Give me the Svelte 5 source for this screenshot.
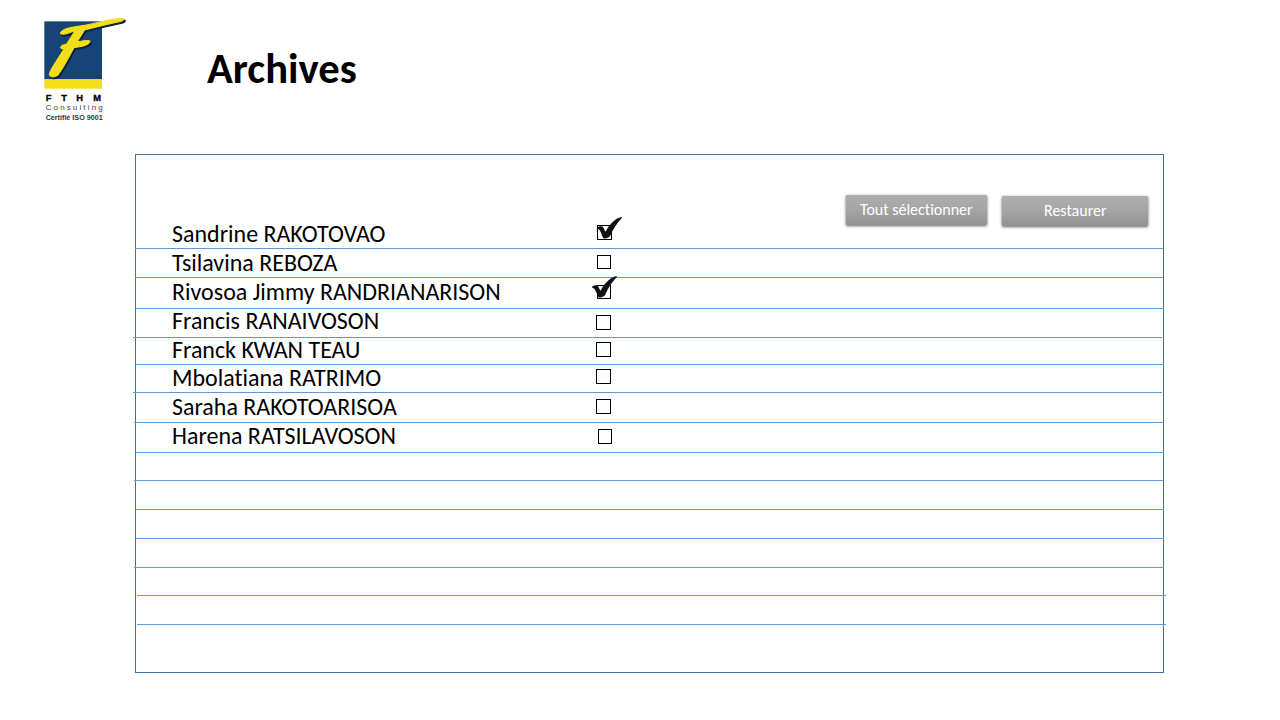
<script>
  // bottom: y of the rule under the row; from/to: horizontal extent of the rule
  // box: [x, y, width, height] of the checkbox; base: text baseline
  const lines = [
    { bottom: 248, from: 135, to: 1163, name: 'Sandrine RAKOTOVAO', base: 242, box: [597, 225, 15, 15], tick: [0, -9] },
    { bottom: 277, from: 135, to: 1163, name: 'Tsilavina REBOZA', base: 271, box: [597, 255, 14, 14] },
    { bottom: 308, from: 136, to: 1164, name: 'Rivosoa Jimmy RANDRIANARISON', base: 300, box: [597, 285, 14, 14], tick: [-5, -10] },
    { bottom: 337, from: 133, to: 1162, name: 'Francis RANAIVOSON', base: 329, box: [596, 315, 15, 15] },
    { bottom: 364, from: 136, to: 1164, name: 'Franck KWAN TEAU', base: 358, box: [596, 342, 15, 15] },
    { bottom: 392, from: 133, to: 1162, name: 'Mbolatiana RATRIMO', base: 386, box: [596, 369, 15, 15] },
    { bottom: 422, from: 134, to: 1163, name: 'Saraha RAKOTOARISOA', base: 415, box: [596, 399, 15, 15] },
    { bottom: 452, from: 136, to: 1164, name: 'Harena RATSILAVOSON', base: 444, box: [598, 429, 14, 15] },
    { bottom: 480, from: 134, to: 1163 },
    { bottom: 509, from: 136, to: 1164 },
    { bottom: 538, from: 136, to: 1164 },
    { bottom: 567, from: 134, to: 1164 },
    { bottom: 595, from: 137, to: 1166 },
    { bottom: 624, from: 137, to: 1166 }
  ];
  const FIRST = 219;
  const rows = lines.map((l, i) => ({ ...l, top: i ? lines[i - 1].bottom + 1 : FIRST }));
  const swoosh = 'M76 71C78 57 102 53 134 48C182 42 222 25 266 26C268 30 263 33 254 35C220 42 172 54 149 60L127 95C141 94 150 90 164 92C169 99 153 106 142 109L117 113C101 143 84 176 69 195C60 203 43 203 43 193C43 182 65 153 86 118C79 117 75 114 77 110C80 105 88 104 95 102L119 64C106 65 92 77 76 71Z';
</script>

<main>
  <header>
    <svg class="logo" viewBox="0 0 300 360">
      <rect x="28" y="34" width="173" height="174" fill="#174477" />
      <rect x="28" y="208" width="173" height="28" fill="#f3df18" />
      <path fill="#10233b" stroke="#10233b" stroke-width="4" transform="translate(4 5)" d={swoosh} />
      <path fill="#f3df18" stroke="#f3df18" stroke-width="3" d={swoosh} />
      <g font-family="'Liberation Sans', sans-serif">
        <text x="32 79 124 175" y="272" font-size="28" font-weight="bold" stroke="#000" stroke-width="1">FTHM</text>
        <text x="32" y="301" font-size="24" fill="#444" textLength="171">Consulting</text>
        <text x="32" y="331" font-size="23" font-weight="bold" fill="#333" textLength="171" lengthAdjust="spacingAndGlyphs">Certifié ISO 9001</text>
      </g>
    </svg>
    <h1>Archives</h1>
  </header>

  <section class="panel">
    <div class="actions">
      <button class="all">Tout sélectionner</button>
      <button class="restore">Restaurer</button>
    </div>
    <ul>
      {#each rows as r}
        <li style="height:{r.bottom - r.top + 1}px">
          {#if r.name}
            <span class="name" style="margin-top:{r.base - 22 - r.top}px">{r.name}</span>
            <span class="check" style="width:{r.box[2]}px;height:{r.box[3]}px;margin-top:{r.box[1] - r.top}px;margin-left:{r.box[0] - 596}px">
              {#if r.tick}
                <svg class="tick" viewBox="0 0 78 66" style="left:{r.tick[0] - 1}px;top:{r.tick[1]}px">
                  <path d="M0 32C4 28 13 26 17 29C21 34 23 40 26 44C34 27 54 4 71 1C75 1 76 2 74 4C60 18 49 35 39 58C35 63 22 68 18 62C14 52 12 44 7 38C4 36 0 35 0 32Z" />
                </svg>
              {/if}
            </span>
          {/if}
          <i style="left:{r.from - 136}px;width:{r.to - r.from}px"></i>
        </li>
      {/each}
    </ul>
  </section>
</main>

<style>
  :global(body) { background: #fff; }
  main {
    box-sizing: border-box;
    width: 1280px;
    height: 720px;
    overflow: hidden;
    font-family: Carlito, Lato, sans-serif;
    font-variant-ligatures: none;
    color: #000;
  }
  header { display: flex; height: 154px; padding-left: 35px; box-sizing: border-box; }
  .logo { width: 100px; height: 120px; margin-top: 10px; }
  h1 { margin: 44px 0 0 72px; font-size: 42.6px; line-height: 48px; font-weight: 700; }
  .panel {
    box-sizing: border-box;
    width: 1029px;
    height: 519px;
    margin-left: 135px;
    border: 1px solid #41719c;
  }
  .actions { display: flex; height: 64px; padding: 40px 0 0 710px; box-sizing: border-box; }
  button {
    height: 30px;
    padding: 0;
    border: 0;
    border-radius: 1px;
    background: linear-gradient(#afafaf, #a5a5a5 50%, #929292);
    box-shadow: 0 1px 3px rgba(0, 0, 0, .63);
    color: #fff;
    font: 16px/30px Carlito, Lato, sans-serif;
    font-variant-ligatures: none;
    text-align: left;
  }
  .all { width: 141px; padding-left: 14px; }
  .restore { width: 146px; margin: 1px 0 0 15px; padding-left: 42px; }
  ul { margin: 0; padding: 0; list-style: none; }
  li { position: relative; display: flex; align-items: flex-start; }
  .name { box-sizing: border-box; width: 460px; padding-left: 36px; font-size: 23.97px; line-height: 28px; flex: none; height: 20px; white-space: nowrap; }
  .check { position: relative; box-sizing: border-box; border: 1px solid #000; flex: none; }
  .tick { position: absolute; width: 26px; height: 22px; fill: #111; }
  i { position: absolute; bottom: 0; height: 1px; background: #5b9bd5; }
</style>
